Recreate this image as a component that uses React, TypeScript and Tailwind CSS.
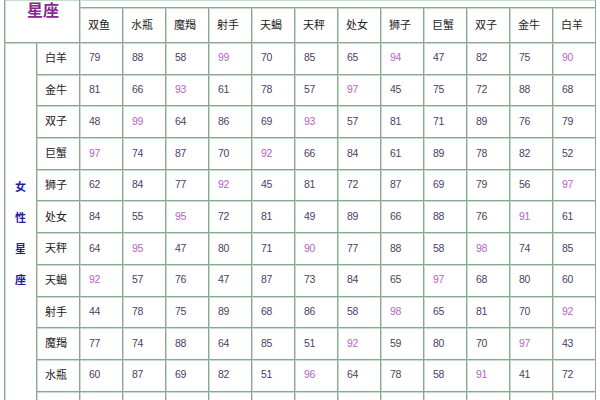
const cols = ["双鱼", "水瓶", "魔羯", "射手", "天蝎", "天秤", "处女", "狮子", "巨蟹", "双子", "金牛", "白羊"];

// the last row (双鱼) falls below the crop, only its top edge shows
const rows: { name: string; scores: number[] }[] = [
  { name: "白羊", scores: [79, 88, 58, 99, 70, 85, 65, 94, 47, 82, 75, 90] },
  { name: "金牛", scores: [81, 66, 93, 61, 78, 57, 97, 45, 75, 72, 88, 68] },
  { name: "双子", scores: [48, 99, 64, 86, 69, 93, 57, 81, 71, 89, 76, 79] },
  { name: "巨蟹", scores: [97, 74, 87, 70, 92, 66, 84, 61, 89, 78, 82, 52] },
  { name: "狮子", scores: [62, 84, 77, 92, 45, 81, 72, 87, 69, 79, 56, 97] },
  { name: "处女", scores: [84, 55, 95, 72, 81, 49, 89, 66, 88, 76, 91, 61] },
  { name: "天秤", scores: [64, 95, 47, 80, 71, 90, 77, 88, 58, 98, 74, 85] },
  { name: "天蝎", scores: [92, 57, 76, 47, 87, 73, 84, 65, 97, 68, 80, 60] },
  { name: "射手", scores: [44, 78, 75, 89, 68, 86, 58, 98, 65, 81, 70, 92] },
  { name: "魔羯", scores: [77, 74, 88, 64, 85, 51, 92, 59, 80, 70, 97, 43] },
  { name: "水瓶", scores: [60, 87, 69, 82, 51, 96, 64, 78, 58, 91, 41, 72] },
  { name: "", scores: [] },
];

// 1px dark rule plus a light inner edge, like an old bevelled table
const cell = "border-r border-b border-[#8aa893] shadow-[inset_1px_1px_0_#c9dbcd] bg-white";

export default function App() {
  return (
    <div
      className="w-[600px] h-[400px] overflow-hidden bg-white pl-[4px]"
      style={{ fontFamily: '"Liberation Sans", "Noto Sans CJK SC", sans-serif' }}
    >
      <div className="grid grid-cols-[32px_43px_repeat(12,43px)] grid-rows-[8px_35px_repeat(12,31.7px)] border-l border-[#8aa893] w-max">
        {/* corner */}
        <div className={`${cell} col-span-2 row-span-2 flex justify-center pt-[1px] pl-[2px]`}>
          <span className="text-[16px] leading-[20px] font-bold text-[#86288e]">星座</span>
        </div>
        {/* top band, its header text is above the crop */}
        <div className={`${cell} col-span-12`} />

        {cols.map((c) => (
          <div key={c + "h"} className={`${cell} flex items-center pl-[8px] text-[11px] text-[#222]`}>
            {c}
          </div>
        ))}

        {/* row group label */}
        <div className={`${cell} row-span-12 flex flex-col items-center justify-center pt-[3px] text-[11px] font-bold leading-[31px] text-[#1e1e9c]`}>
          <span>女</span>
          <span>性</span>
          <span>星</span>
          <span>座</span>
        </div>

        {rows.map((r, ri) => (
          <div key={ri} className="contents">
            <div className={`${cell} flex items-center pl-[8px] text-[11px] text-[#222]`}>{r.name}</div>
            {cols.map((_, i) => {
              const v = r.scores[i];
              return (
                <div
                  key={i}
                  className={`${cell} flex items-center pl-[9px] text-[10.5px] tracking-[-0.3px] ${
                    v >= 90 ? "text-[#b863c8]" : "text-[#4d4062]"
                  }`}
                >
                  {v ?? ""}
                </div>
              );
            })}
          </div>
        ))}
      </div>
    </div>
  );
}
